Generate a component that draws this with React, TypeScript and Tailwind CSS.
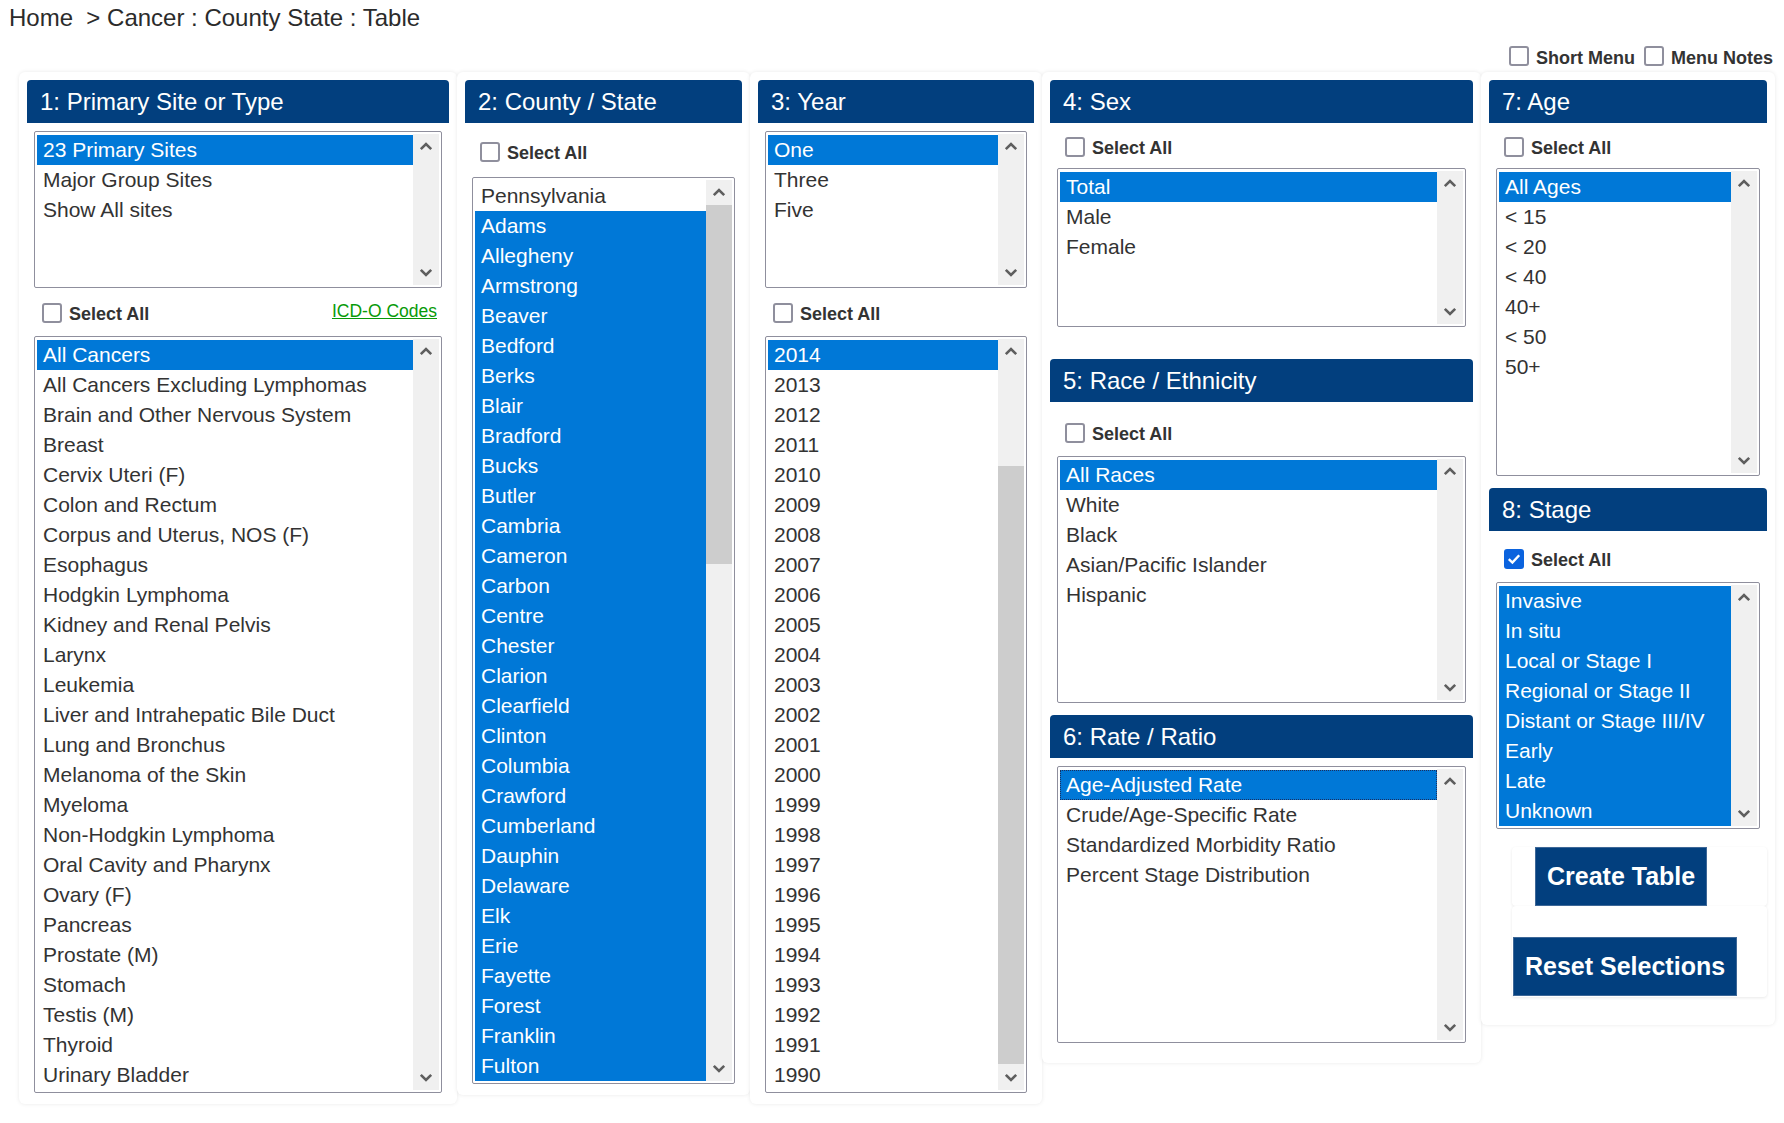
import React from "react";

const sites = [
  "All Cancers",
  "All Cancers Excluding Lymphomas",
  "Brain and Other Nervous System",
  "Breast",
  "Cervix Uteri (F)",
  "Colon and Rectum",
  "Corpus and Uterus, NOS (F)",
  "Esophagus",
  "Hodgkin Lymphoma",
  "Kidney and Renal Pelvis",
  "Larynx",
  "Leukemia",
  "Liver and Intrahepatic Bile Duct",
  "Lung and Bronchus",
  "Melanoma of the Skin",
  "Myeloma",
  "Non-Hodgkin Lymphoma",
  "Oral Cavity and Pharynx",
  "Ovary (F)",
  "Pancreas",
  "Prostate (M)",
  "Stomach",
  "Testis (M)",
  "Thyroid",
  "Urinary Bladder",
];

const counties = [
  "Pennsylvania",
  "Adams",
  "Allegheny",
  "Armstrong",
  "Beaver",
  "Bedford",
  "Berks",
  "Blair",
  "Bradford",
  "Bucks",
  "Butler",
  "Cambria",
  "Cameron",
  "Carbon",
  "Centre",
  "Chester",
  "Clarion",
  "Clearfield",
  "Clinton",
  "Columbia",
  "Crawford",
  "Cumberland",
  "Dauphin",
  "Delaware",
  "Elk",
  "Erie",
  "Fayette",
  "Forest",
  "Franklin",
  "Fulton",
];

const years = Array.from({ length: 25 }, (_, i) => String(2014 - i));

const stages = [
  "Invasive",
  "In situ",
  "Local or Stage I",
  "Regional or Stage II",
  "Distant or Stage III/IV",
  "Early",
  "Late",
  "Unknown",
];

function Chevron({ up }: { up?: boolean }) {
  return (
    <svg width="14" height="9" viewBox="0 0 14 9" className="block">
      <polyline
        points={up ? "1.8,7.2 7,2 12.2,7.2" : "1.8,1.8 7,7 12.2,1.8"}
        fill="none"
        stroke="#5f5f5f"
        strokeWidth="2.6"
      />
    </svg>
  );
}

function Checkbox({ checked }: { checked?: boolean }) {
  if (checked) {
    return (
      <span className="w-[20px] h-[20px] rounded-[3px] bg-[#0b63de] flex items-center justify-center shrink-0">
        <svg width="14" height="12" viewBox="0 0 14 12">
          <polyline
            points="1.8,6.2 5.4,9.6 12.2,2.2"
            fill="none"
            stroke="white"
            strokeWidth="2.4"
          />
        </svg>
      </span>
    );
  }
  return (
    <span className="w-[20px] h-[20px] rounded-[3px] border-2 border-[#8f8f9d] bg-white shrink-0" />
  );
}

function SelectAll({ checked, className }: { checked?: boolean; className: string }) {
  return (
    <div className={`flex items-center gap-[7px] h-[20px] pl-[8px] ${className}`}>
      <Checkbox checked={checked} />
      <span className="text-[18px] font-bold text-[#333] leading-[20px] pt-[2px]">
        Select All
      </span>
    </div>
  );
}

function Header({ title, className = "" }: { title: string; className?: string }) {
  return (
    <div
      className={`h-[43px] bg-[#023f7e] rounded-t-[4px] flex items-center pl-[13px] text-white text-[24px] ${className}`}
    >
      {title}
    </div>
  );
}

type ListProps = {
  items: string[];
  selected: (i: number) => boolean;
  className: string;
  thumb?: string;
  focus?: number;
};

function ListBox({ items, selected, className, thumb, focus }: ListProps) {
  return (
    <div
      className={`border border-[#8f8f9d] rounded-[2px] p-[2px] flex bg-white overflow-hidden ${className}`}
    >
      <div className="flex-1 pt-[1px] overflow-hidden">
        {items.map((item, i) => (
          <div
            key={item}
            className={`h-[30px] leading-[30px] pl-[6px] text-[21px] whitespace-nowrap ${
              selected(i) ? "bg-[#0078d7] text-white" : "text-[#333]"
            } ${
              focus === i
                ? "outline-1 outline-dotted outline-[#1c2f5e] -outline-offset-1"
                : ""
            }`}
          >
            {item}
          </div>
        ))}
      </div>
      <div className="w-[26px] bg-[#f0f0f0] flex flex-col shrink-0">
        <div className="h-[25px] flex items-center justify-center shrink-0">
          <Chevron up />
        </div>
        <div className="flex-1 overflow-hidden">
          {thumb && <div className={`bg-[#cdcdcd] ${thumb}`} />}
        </div>
        <div className="h-[26px] flex items-center justify-center shrink-0">
          <Chevron />
        </div>
      </div>
    </div>
  );
}

export default function App() {
  return (
    <div className="min-h-screen bg-white font-['Liberation_Sans',Arial,sans-serif] text-[#333]">
      {/* Breadcrumb */}
      <div className="h-[36px] pt-[4px] pl-[9px] text-[24px] leading-[28px] text-[#2b2b2b]">
        Home{"\u00a0"} &gt; Cancer : County State : Table
      </div>

      {/* Menu options */}
      <div className="mt-[10px] h-[20px] flex justify-end items-center pr-[11px] gap-[9px]">
        <label className="flex items-center gap-[7px]">
          <Checkbox />
          <span className="text-[18px] font-bold leading-[20px] pt-[3px]">Short Menu</span>
        </label>
        <label className="flex items-center gap-[7px]">
          <Checkbox />
          <span className="text-[18px] font-bold leading-[20px] pt-[3px]">Menu Notes</span>
        </label>
      </div>

      {/* Panels */}
      <div className="mt-[6px] pl-[19px] flex items-start">
        {/* 1 */}
        <div className="w-[438px] px-[8px] pt-[8px] pb-[11px] rounded-[6px] bg-white shadow-[0_0_4px_rgba(0,0,0,0.09)]">
          <Header title="1: Primary Site or Type" />
          <div className="px-[7px]">
            <ListBox
              className="mt-[8px] h-[157px]"
              items={["23 Primary Sites", "Major Group Sites", "Show All sites"]}
              selected={(i) => i === 0}
            />
            <div className="flex items-start justify-between mt-[15px]">
              <SelectAll className="" />
              <a className="text-[17.5px] leading-[18px] text-[#089a08] underline mr-[5px] -mt-[1px]">
                ICD-O Codes
              </a>
            </div>
            <ListBox className="mt-[13px] h-[757px]" items={sites} selected={(i) => i === 0} />
          </div>
        </div>

        {/* 2 */}
        <div className="w-[293px] px-[8px] pt-[8px] pb-[11px] rounded-[6px] bg-white shadow-[0_0_4px_rgba(0,0,0,0.09)]">
          <Header title="2: County / State" />
          <div className="px-[7px]">
            <SelectAll className="mt-[19px]" />
            <ListBox
              className="mt-[15px] h-[907px]"
              items={counties}
              selected={(i) => i > 0}
              thumb="h-[359px]"
            />
          </div>
        </div>

        {/* 3 */}
        <div className="w-[292px] px-[8px] pt-[8px] pb-[11px] rounded-[6px] bg-white shadow-[0_0_4px_rgba(0,0,0,0.09)]">
          <Header title="3: Year" />
          <div className="px-[7px]">
            <ListBox
              className="mt-[8px] h-[157px]"
              items={["One", "Three", "Five"]}
              selected={(i) => i === 0}
            />
            <SelectAll className="mt-[15px]" />
            <ListBox
              className="mt-[13px] h-[757px]"
              items={years}
              selected={(i) => i === 0}
              thumb="mt-[102px] h-[598px]"
            />
          </div>
        </div>

        {/* 4, 5, 6 */}
        <div className="w-[439px] px-[8px] pt-[8px] pb-[20px] rounded-[6px] bg-white shadow-[0_0_4px_rgba(0,0,0,0.09)]">
          <Header title="4: Sex" />
          <div className="px-[7px]">
            <SelectAll className="mt-[14px]" />
            <ListBox
              className="mt-[11px] h-[159px]"
              items={["Total", "Male", "Female"]}
              selected={(i) => i === 0}
            />
          </div>
          <Header title="5: Race / Ethnicity" className="mt-[32px]" />
          <div className="px-[7px]">
            <SelectAll className="mt-[21px]" />
            <ListBox
              className="mt-[13px] h-[247px]"
              items={["All Races", "White", "Black", "Asian/Pacific Islander", "Hispanic"]}
              selected={(i) => i === 0}
            />
          </div>
          <Header title="6: Rate / Ratio" className="mt-[12px]" />
          <div className="px-[7px]">
            <ListBox
              className="mt-[8px] h-[277px]"
              items={[
                "Age-Adjusted Rate",
                "Crude/Age-Specific Rate",
                "Standardized Morbidity Ratio",
                "Percent Stage Distribution",
              ]}
              selected={(i) => i === 0}
              focus={0}
            />
          </div>
        </div>

        {/* 7, 8 */}
        <div className="w-[294px] px-[8px] pt-[8px] pb-[28px] rounded-[6px] bg-white shadow-[0_0_4px_rgba(0,0,0,0.09)]">
          <Header title="7: Age" />
          <div className="px-[7px]">
            <SelectAll className="mt-[14px]" />
            <ListBox
              className="mt-[11px] h-[308px]"
              items={["All Ages", "< 15", "< 20", "< 40", "40+", "< 50", "50+"]}
              selected={(i) => i === 0}
            />
          </div>
          <Header title="8: Stage" className="mt-[12px]" />
          <div className="px-[7px]">
            <SelectAll checked className="mt-[18px]" />
            <ListBox className="mt-[13px] h-[247px]" items={stages} selected={() => true} />
          </div>
          <div className="ml-[23px] mt-[18px] rounded-[4px] bg-white shadow-[0_1px_3px_rgba(0,0,0,0.09)]">
            <button className="ml-[23px] h-[59px] px-[11px] bg-[#023f7e] border border-[#3d6797] text-white text-[25px] font-bold">
              Create Table
            </button>
          </div>
          <div className="ml-[23px] pt-[31px] pb-[1px] rounded-[4px] bg-white shadow-[0_1px_3px_rgba(0,0,0,0.09)]">
            <button className="ml-[1px] h-[59px] px-[11px] bg-[#023f7e] border border-[#3d6797] text-white text-[25px] font-bold">
              Reset Selections
            </button>
          </div>
        </div>
      </div>
    </div>
  );
}
